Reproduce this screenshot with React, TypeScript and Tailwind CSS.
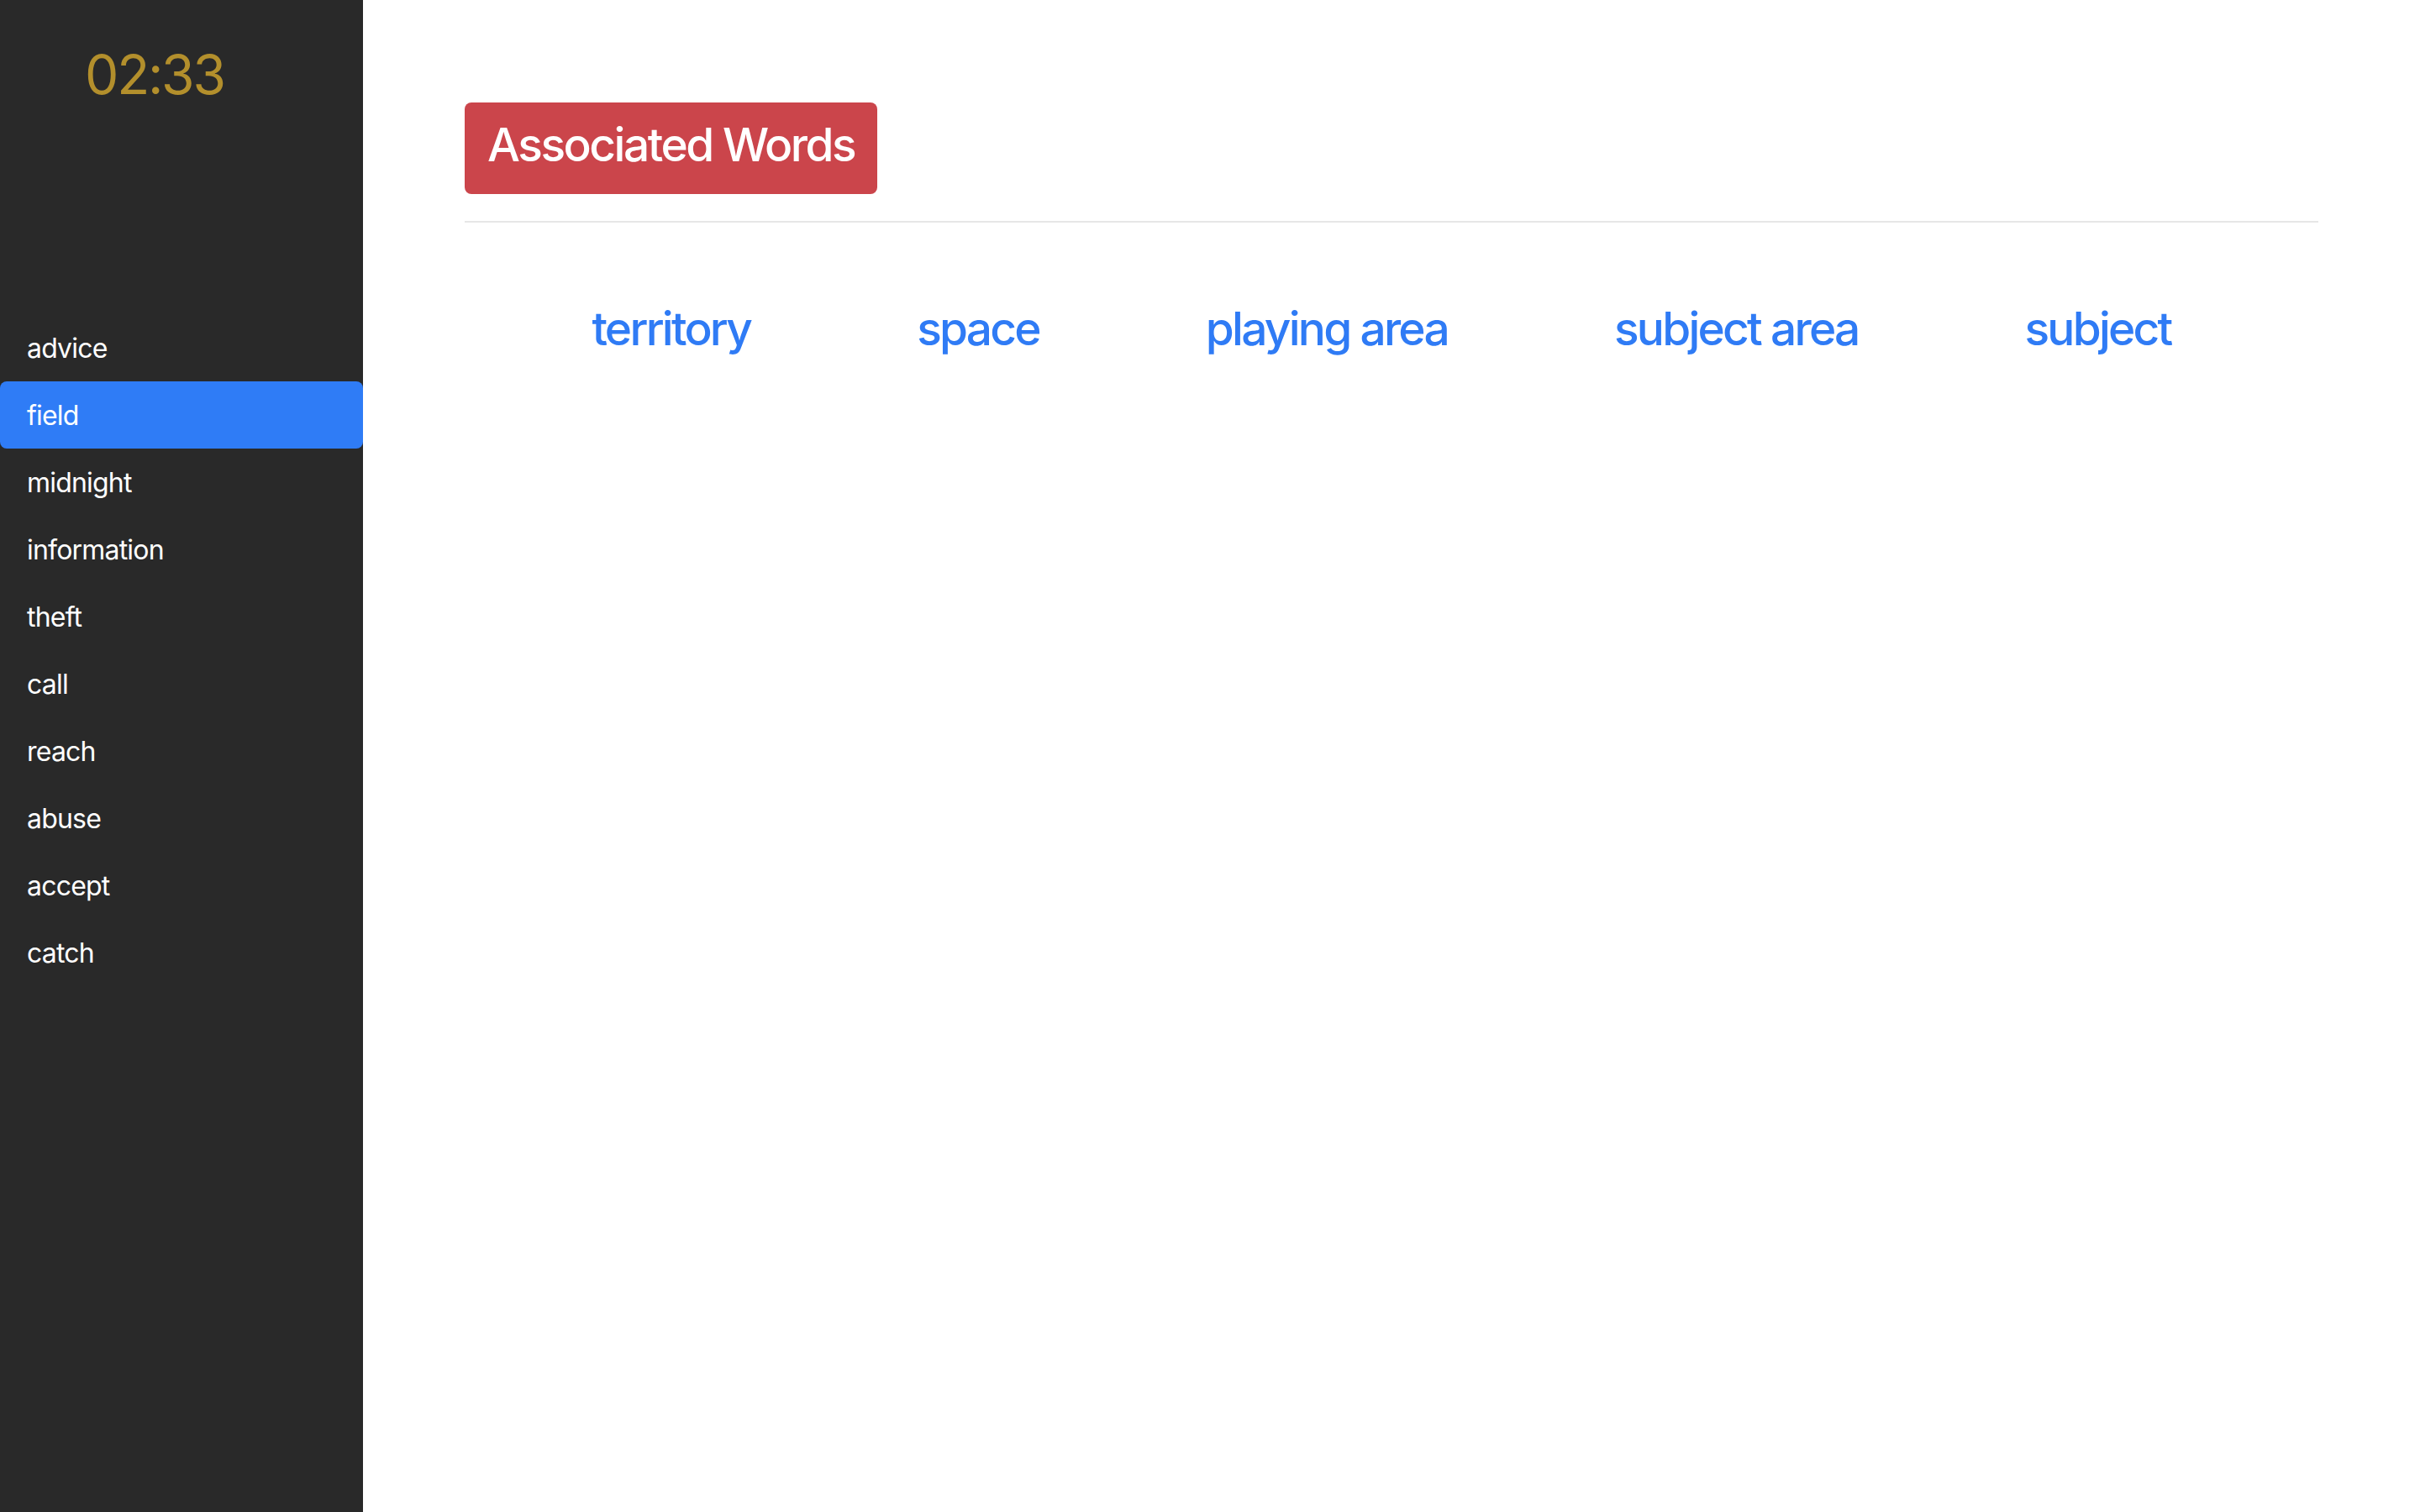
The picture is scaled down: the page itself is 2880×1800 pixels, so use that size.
import { useState } from 'react';

const navWords = [
  'advice',
  'field',
  'midnight',
  'information',
  'theft',
  'call',
  'reach',
  'abuse',
  'accept',
  'catch',
];

const associated = ['territory', 'space', 'playing area', 'subject area', 'subject'];

const App = () => {
  const [active, setActive] = useState('field');

  return (
    <div
      className="flex min-h-screen w-full bg-white"
      style={{ fontFamily: 'Inter, "Liberation Sans", Arial, sans-serif' }}
    >
      {/* sidebar */}
      <aside className="flex w-[432px] shrink-0 flex-col bg-[#292929]">
        <div className="pl-[101px] pt-[51px] text-[64px] leading-[1.2] font-normal tracking-[-0.035em] text-[#b38f2c]">
          02:33
        </div>
        <nav className="mt-[246px] flex flex-col">
          {navWords.map((w) => (
            <button
              key={w}
              onClick={() => setActive(w)}
              className={`h-[80px] px-[32px] pt-[2px] text-left text-[32px] leading-[48px] tracking-[-0.025em] text-white ${
                active === w ? 'rounded-lg bg-[#2f7cf6]' : ''
              }`}
            >
              {w}
            </button>
          ))}
        </nav>
      </aside>

      {/* main */}
      <main className="flex-1 px-[121px] pt-[122px]">
        <div className="inline-block rounded-lg bg-[#cb454b] px-[27px] pt-[17px] pb-[26px]">
          <h3 className="text-[55px] leading-[1.2] font-medium tracking-[-0.045em] text-white">
            Associated Words
          </h3>
        </div>
        <hr className="mt-[32px] border-t-2 border-[#e6e6e6]" />
        <div className="mt-[93px] flex justify-center gap-[198px] pr-[24px]">
          {associated.map((w) => (
            <a
              key={w}
              href="#"
              className="text-[55px] leading-[1.2] font-medium tracking-[-0.05em] text-[#2f7bf5]"
            >
              {w}
            </a>
          ))}
        </div>
      </main>
    </div>
  );
};

export default App;
